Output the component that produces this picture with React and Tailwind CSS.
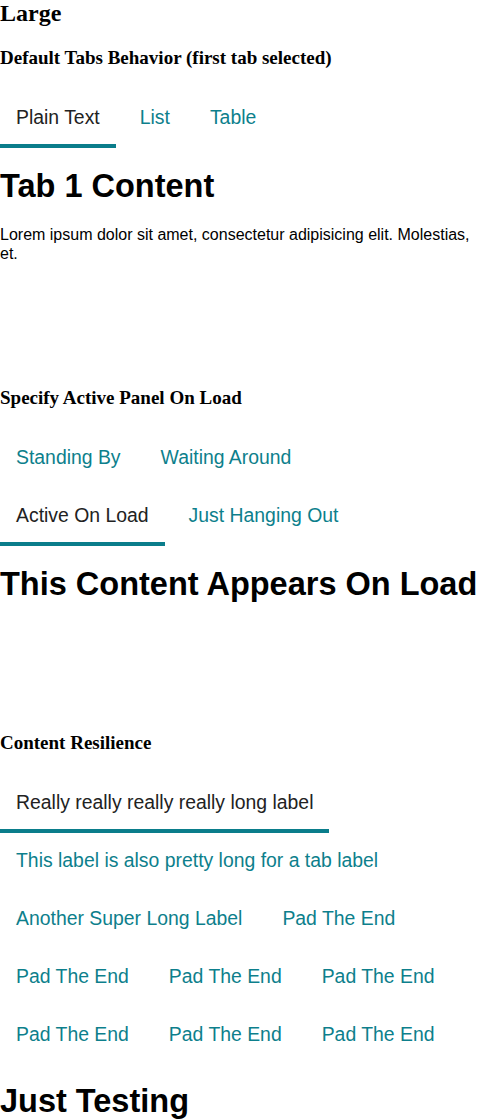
import React, { useState } from 'react';

const serif = "font-['Liberation_Serif',serif]";
const panelTitle = 'text-[32.5px] font-bold leading-[36.8px]';

function Tabs({ labels, initial = 0, children }) {
  const [active, setActive] = useState(initial);
  return (
    <div>
      <div role="tablist" className="flex flex-wrap">
        {labels.map((label, i) => (
          <button
            key={i}
            role="tab"
            aria-selected={active === i}
            onClick={() => setActive(i)}
            className={`mr-2 px-4 py-4 border-b-4 text-[19.4px] leading-[22px] whitespace-nowrap cursor-pointer ${
              active === i ? 'border-[#0a7d8b] text-[#222222]' : 'border-transparent text-[#0d7f8c]'
            }`}
          >
            {label}
          </button>
        ))}
      </div>
      {children(active)}
    </div>
  );
}

export default function App() {
  return (
    <div className="font-['Liberation_Sans',Arial,sans-serif] text-black bg-white min-h-screen">
      <h2 className={`${serif} text-[24px] font-bold leading-[1.15]`}>Large</h2>

      {/* Default behaviour */}
      <section>
        <h3 className={`${serif} text-[19px] font-bold leading-[1.15] mt-[19px] mb-[22px]`}>
          Default Tabs Behavior (first tab selected)
        </h3>
        <Tabs labels={['Plain Text', 'List', 'Table']}>
          {(active) => (
            <div role="tabpanel">
              {active === 0 && (
                <>
                  <h1 className={`${panelTitle} mt-[20px]`}>Tab 1 Content</h1>
                  <p className="text-[16px] leading-[1.15] mt-[21px]">
                    Lorem ipsum dolor sit amet, consectetur adipisicing elit. Molestias, et.
                  </p>
                </>
              )}
              {active === 1 && (
                <ul className="text-[16px] leading-[1.15] mt-[20px] list-disc pl-10">
                  <li>Item one</li>
                  <li>Item two</li>
                </ul>
              )}
              {active === 2 && <h1 className={`${panelTitle} mt-[20px]`}>Table</h1>}
            </div>
          )}
        </Tabs>
      </section>

      {/* Active panel on load */}
      <section className="mt-[124px]">
        <h3 className={`${serif} text-[19px] font-bold leading-[1.15] mb-[21px]`}>
          Specify Active Panel On Load
        </h3>
        <Tabs labels={['Standing By', 'Waiting Around', 'Active On Load', 'Just Hanging Out']} initial={2}>
          {(active) => (
            <div role="tabpanel">
              <h1 className={`${panelTitle} mt-[20px]`}>
                {active === 2 ? 'This Content Appears On Load' : 'Nothing To See Here'}
              </h1>
            </div>
          )}
        </Tabs>
      </section>

      {/* Content resilience */}
      <section className="mt-[129px]">
        <h3 className={`${serif} text-[19px] font-bold leading-[1.15] mb-[21px]`}>Content Resilience</h3>
        <Tabs
          labels={[
            'Really really really really long label',
            'This label is also pretty long for a tab label',
            'Another Super Long Label',
            'Pad The End',
            'Pad The End',
            'Pad The End',
            'Pad The End',
            'Pad The End',
            'Pad The End',
            'Pad The End',
          ]}
        >
          {() => (
            <div role="tabpanel">
              <h1 className={`${panelTitle} mt-[18px]`}>Just Testing</h1>
            </div>
          )}
        </Tabs>
      </section>
    </div>
  );
}
